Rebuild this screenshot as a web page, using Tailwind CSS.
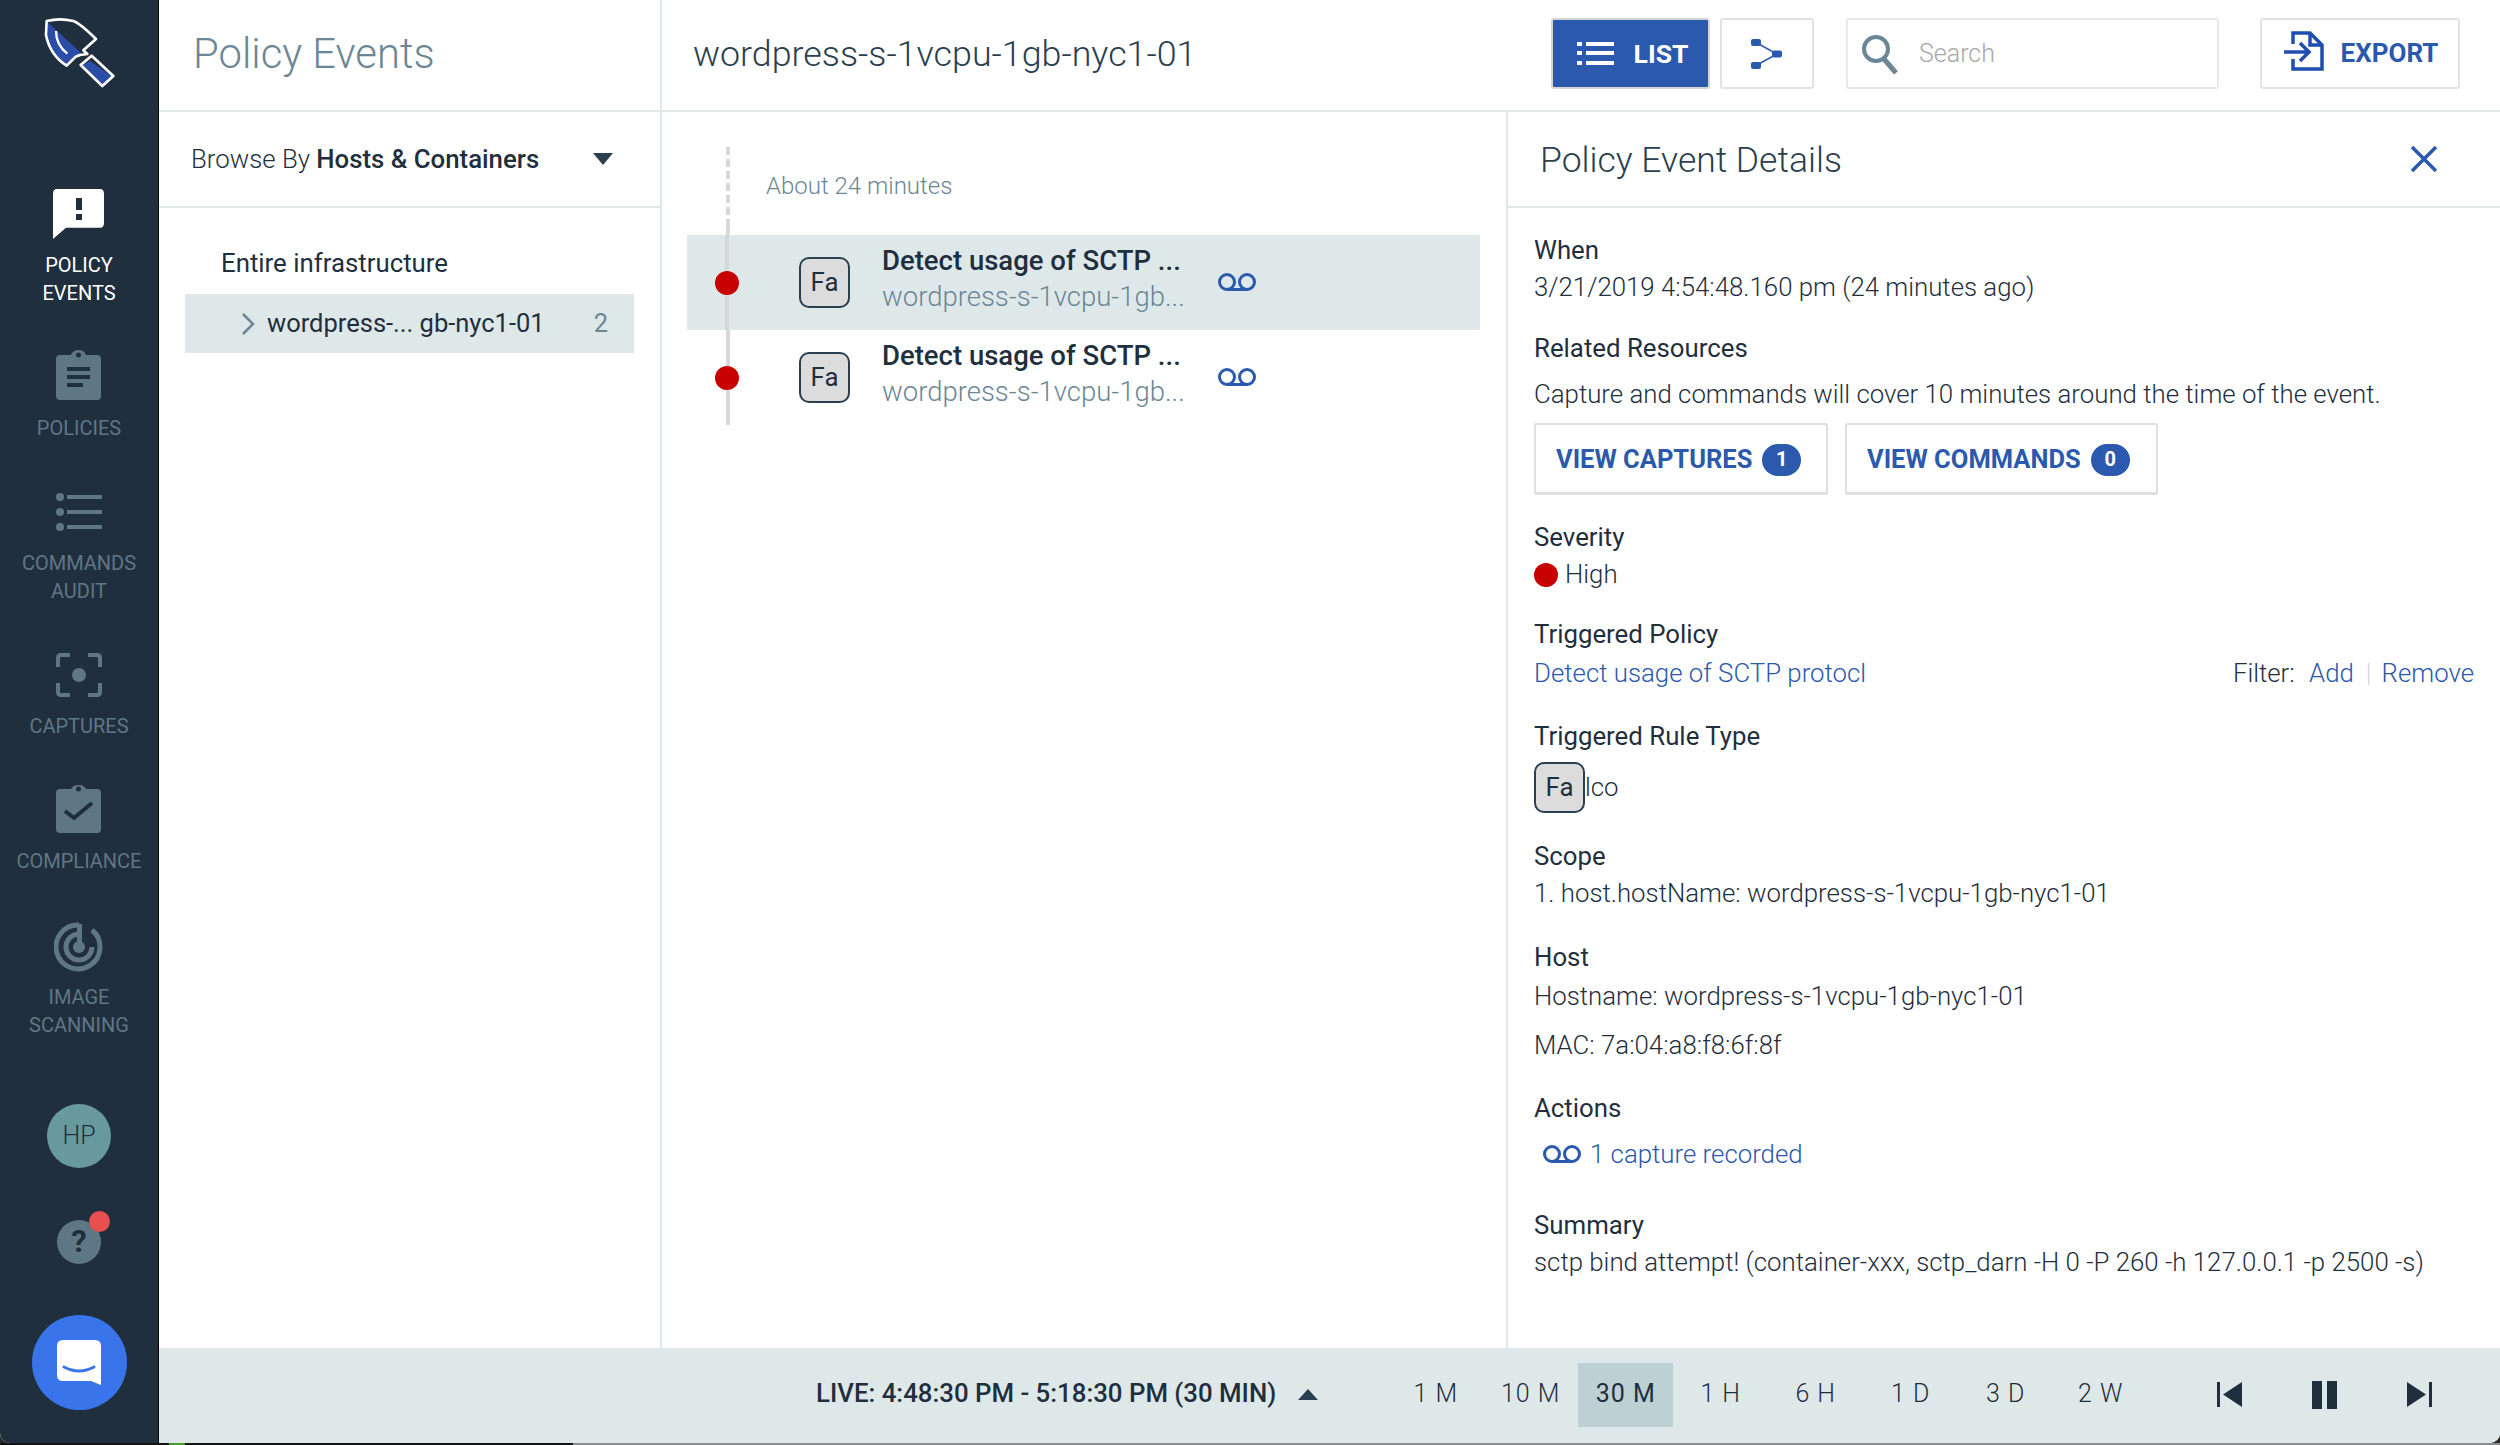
<!DOCTYPE html>
<html lang="en">
<head>
    <meta charset="UTF-8" />
    <title>Policy Events</title>
    <script src="https://cdn.jsdelivr.net/npm/@tailwindcss/browser@4"></script>
</head>
<body class="bg-[#2b2b2b] w-[2500px] h-[1445px] overflow-hidden font-['Roboto',sans-serif] text-[25.8px] font-light text-[#1f2f3e]">
    <div class="flex h-[1443px] bg-white rounded-b-[10px] overflow-hidden">

        <!-- sidebar -->
        <nav class="w-[159px] shrink-0 bg-[#202f3e] border-r border-black flex flex-col items-center text-[20px] leading-[28px] font-normal text-[#5f7685] text-center">
            <svg class="mt-[5px] ml-[1px] w-[100px] h-[100px]" viewBox="0 0 300 300">
                <path d="M53 52 L160 150 L138 152 L110 178 Q65 150 53 90 Z" fill="#2a4ea8"/>
                <path d="M180 168 L245 213 L217 238 L158 180 Z" fill="#2a4ea8"/>
                <path d="M50 48 Q90 38 130 48 Q150 55 198 102 L160 136 L172 147 L150 150 L137 155 L110 182 Q60 150 48 90 Z" fill="none" stroke="#fff" stroke-width="8" stroke-linejoin="round"/>
                <path d="M185 152 L250 213 L217 243 L152 180 Z" fill="none" stroke="#fff" stroke-width="8" stroke-linejoin="round"/>
                <path d="M78 78 Q78 120 112 146" fill="none" stroke="#fff" stroke-width="7"/>
            </svg>

            <a class="mt-[84px] flex flex-col items-center text-white">
                <svg class="w-[51px] h-[50px]" viewBox="0 0 51 50">
                    <path d="M4 0 H47 Q51 0 51 4 V27 Q51 31 47 31 H13 L0 40 V4 Q0 0 4 0 Z" transform="scale(1 1.25)" fill="#fff"/>
                    <rect x="23" y="9" width="6" height="12" fill="#202f3e"/>
                    <rect x="23" y="25" width="6" height="6" fill="#202f3e"/>
                </svg>
                <span class="mt-[12px]">POLICY<br>EVENTS</span>
            </a>
            <a class="mt-[43px] flex flex-col items-center">
                <svg class="w-[45px] h-[50px]" viewBox="0 0 45 50">
                    <path d="M4 5 H15 Q17 0 22.500 0 Q28 0 30 5 H41 Q45 5 45 9 V46 Q45 50 41 50 H4 Q0 50 0 46 V9 Q0 5 4 5 Z" fill="#5f7685"/>
                    <circle cx="22.500" cy="5" r="2.500" fill="#202f3e"/>
                    <path d="M11 17 H34 V21 H11 Z M11 25 H34 V29 H11 Z M11 33 H27 V37 H11 Z" fill="#202f3e"/>
                </svg>
                <span class="mt-[14px]">POLICIES</span>
            </a>
            <a class="mt-[51px] flex flex-col items-center">
                <svg class="w-[46px] h-[38px]" viewBox="0 0 46 38">
                    <circle cx="4" cy="4" r="4" fill="#5f7685"/><circle cx="4" cy="19" r="4" fill="#5f7685"/><circle cx="4" cy="34" r="4" fill="#5f7685"/>
                    <path d="M11 2 H46 V6 H11 Z M11 17 H46 V21 H11 Z M11 32 H46 V36 H11 Z" fill="#5f7685"/>
                </svg>
                <span class="mt-[18px]">COMMANDS<br>AUDIT</span>
            </a>
            <a class="mt-[48px] flex flex-col items-center">
                <svg class="w-[46px] h-[44px]" viewBox="0 0 46 44">
                    <path d="M2 14 V5 Q2 2 5 2 H14 M32 2 H41 Q44 2 44 5 V14 M44 30 V39 Q44 42 41 42 H32 M14 42 H5 Q2 42 2 39 V30" fill="none" stroke="#5f7685" stroke-width="4"/>
                    <circle cx="23" cy="22" r="7" fill="#5f7685"/>
                </svg>
                <span class="mt-[15px]">CAPTURES</span>
            </a>
            <a class="mt-[45px] flex flex-col items-center">
                <svg class="w-[45px] h-[48px]" viewBox="0 0 45 48">
                    <path d="M4 4 H15 Q17 0 22.500 0 Q28 0 30 4 H41 Q45 4 45 8 V44 Q45 48 41 48 H4 Q0 48 0 44 V8 Q0 4 4 4 Z" fill="#5f7685"/>
                    <circle cx="22.500" cy="4" r="2.500" fill="#202f3e"/>
                    <path d="M9 26 L18 33 L36 18" fill="none" stroke="#202f3e" stroke-width="4"/>
                </svg>
                <span class="mt-[14px]">COMPLIANCE</span>
            </a>
            <a class="mt-[47px] flex flex-col items-center">
                <svg class="w-[50px] h-[50px]" viewBox="0 0 50 50">
                    <path d="M38 8 A22 22 0 1 1 25 3 " fill="none" stroke="#5f7685" stroke-width="5"/>
                    <path d="M25 12 A13 13 0 1 0 38 25" fill="none" stroke="#5f7685" stroke-width="5"/>
                    <circle cx="25" cy="25" r="6" fill="#5f7685"/>
                    <path d="M23 2 H28 V25 H23 Z" fill="#5f7685"/>
                </svg>
                <span class="mt-[11px]">IMAGE<br>SCANNING</span>
            </a>
            <div class="mt-[65px] w-[64px] h-[64px] rounded-full bg-[#67999d] flex items-center justify-center text-[25px] font-light text-[#1f2f3e]">HP</div>
            <div class="relative mt-[52px] w-[44px] h-[44px] rounded-full bg-[#5f7685] flex items-center justify-center text-[31px] font-bold text-[#202f3e]">
                ?
                <span class="absolute top-[-9px] right-[-9px] w-[21px] h-[21px] rounded-full bg-[#e8504f]"></span>
            </div>
            <div class="mt-[51px] w-[95px] h-[95px] rounded-full bg-[#3a74ea] flex items-center justify-center">
                <svg class="w-[44px] h-[45px]" viewBox="0 0 44 45">
                    <path d="M6 0 H38 Q44 0 44 6 V45 L34 41 H6 Q0 41 0 35 V6 Q0 0 6 0 Z" fill="#fff"/>
                    <path d="M7 27 Q22 35 37 27" fill="none" stroke="#3a74ea" stroke-width="3" stroke-linecap="round"/>
                </svg>
            </div>
        </nav>

        <div class="flex-1 flex flex-col min-w-0">
            <!-- top bar -->
            <header class="h-[112px] shrink-0 flex border-b-2 border-[#dfe8e9]">
                <div class="w-[503px] shrink-0 border-r-2 border-[#dfe8e9] pl-[34px] pb-[2px] flex items-center text-[41.8px] text-[#6b8796]">Policy Events</div>
                <div class="flex-1 flex items-center pl-[31px] pr-[40px]">
                    <h1 class="text-[35.8px] text-[#2a3f50]">wordpress-s-1vcpu-1gb-nyc1-01</h1>
                    <div class="ml-auto flex items-center mb-[3px]">
                        <button class="w-[159px] h-[71px] bg-[#2a59ad] border-2 border-[#d5d5d5] rounded-[3px] flex items-center justify-center gap-[20px] pl-[4px] text-white font-bold text-[26.5px]">
                            <svg class="w-[37px] h-[23px]" viewBox="0 0 37 23" fill="#fff">
                                <rect x="0" y="0" width="5" height="4"/><rect x="0" y="9" width="5" height="4"/><rect x="0" y="19" width="5" height="4"/>
                                <rect x="9" y="0" width="28" height="4"/><rect x="9" y="9" width="28" height="4"/><rect x="9" y="19" width="28" height="4"/>
                            </svg>
                            LIST
                        </button>
                        <button class="ml-[10px] w-[94px] h-[71px] bg-white border-2 border-[#e2e2e2] rounded-[3px] flex items-center justify-center">
                            <svg class="w-[32px] h-[30px]" viewBox="0 0 32 30">
                                <path d="M5 3.500 L26 15 L5 26.500" fill="none" stroke="#2a59ad" stroke-width="1.500"/>
                                <rect x="0" y="0" width="10" height="7" rx="2" fill="#2a59ad"/>
                                <rect x="21" y="11.500" width="10" height="7" rx="2" fill="#2a59ad"/>
                                <rect x="0" y="23" width="10" height="7" rx="2" fill="#2a59ad"/>
                            </svg>
                        </button>
                        <label class="ml-[32px] w-[373px] h-[71px] border-2 border-[#e8e8e8] rounded-[3px] flex items-center pl-[13px] gap-[20px] text-[#a8a8a8] text-[25px]">
                            <svg class="w-[38px] h-[40px]" viewBox="0 0 38 40">
                                <circle cx="15" cy="15" r="12" fill="none" stroke="#6b8796" stroke-width="4"/>
                                <path d="M23 25 L35 39" stroke="#6b8796" stroke-width="5"/>
                            </svg>
                            Search
                        </label>
                        <button class="ml-[41px] w-[200px] h-[71px] bg-white border-2 border-[#e2e2e2] rounded-[3px] flex items-center justify-center gap-[17px] pl-[2px] text-[#2a59ad] font-bold text-[26px]">
                            <svg class="w-[40px] h-[40px] mb-[5px]" viewBox="0 0 40 40" fill="none" stroke="#1f4fae" stroke-width="3.500">
                                <path d="M9 13 V2 H26 L38 14 V38 H9 V28"/>
                                <path d="M26 2 V14 H38"/>
                                <path d="M0 21 H24 M16 12 L25 21 L16 30"/>
                            </svg>
                            EXPORT
                        </button>
                    </div>
                </div>
            </header>

            <div class="flex-1 flex min-h-0">
                <!-- host tree -->
                <aside class="w-[503px] shrink-0 border-r-2 border-[#dfe8e9]">
                    <div class="h-[96px] border-b-2 border-[#dfe8e9] flex items-center justify-between pl-[32px] pr-[47px]">
                        <span class="font-light">Browse By <b class="font-medium">Hosts &amp; Containers</b></span>
                        <span class="w-0 h-0 border-x-[10px] border-x-transparent border-t-[12px] border-t-[#2a3f50]"></span>
                    </div>
                    <div class="pl-[62px] pt-[37px] leading-[36px] font-normal">Entire infrastructure</div>
                    <div class="ml-[26px] mr-[26px] mt-[13px] h-[59px] bg-[#dfe8e9] flex items-center pl-[56px] pr-[26px] font-normal text-[25.5px]">
                        <svg class="w-[14px] h-[24px] mr-[12px]" viewBox="0 0 14 24"><path d="M2 2 L12 12 L2 22" fill="none" stroke="#6b8796" stroke-width="2.500"/></svg>
                        <span>wordpress-... gb-nyc1-01</span>
                        <span class="ml-auto text-[#6b8796]">2</span>
                    </div>
                </aside>

                <!-- event list -->
                <section class="w-[846px] shrink-0 border-r-2 border-[#dfe8e9] relative pt-[25px] pl-[25px]">
                    <div class="absolute left-[64px] top-[35px] h-[80px] border-l-[4px] border-dashed border-[#d8d8d8]"></div>
                    <div class="absolute left-[64px] top-[115px] h-[198px] w-[4px] bg-[#d8d8d8]"></div>
                    <div class="pl-[79px] mt-[8px] h-[90px] pt-[23px] leading-[36px] text-[24px] text-[#6b8796]">About 24 minutes</div>
                    <div class="relative w-[793px] h-[95px] bg-[#dfe8e9] flex items-center">
                        <div class="absolute left-[38px] w-[4px] h-full bg-[#d4d8d9]"></div>
                        <span class="absolute left-[28px] w-[24px] h-[24px] rounded-full bg-[#c80000]"></span>
                        <span class="ml-[112px] w-[51px] h-[51px] rounded-[10px] border-2 border-[#2a3f50] bg-[#dcdcdc] flex items-center justify-center font-normal">Fa</span>
                        <div class="ml-[32px] w-[310px] leading-[36px] text-[27.5px] mb-[7px]">
                            <p class="font-medium truncate">Detect usage of SCTP ...</p>
                            <p class="text-[#6b8796] truncate">wordpress-s-1vcpu-1gb...</p>
                        </div>
                        <svg class="ml-[25px] w-[40px] h-[19px]" viewBox="0 0 40 19" fill="none" stroke="#2a59ad" stroke-width="3"><circle cx="10" cy="9" r="7.500"/><circle cx="30" cy="9" r="7.500"/><path d="M10 16.500 H30"/></svg>
                    </div>
                    <div class="relative w-[793px] h-[95px] flex items-center">
                        <span class="absolute left-[28px] w-[24px] h-[24px] rounded-full bg-[#c80000]"></span>
                        <span class="ml-[112px] w-[51px] h-[51px] rounded-[10px] border-2 border-[#2a3f50] bg-[#dcdcdc] flex items-center justify-center font-normal">Fa</span>
                        <div class="ml-[32px] w-[310px] leading-[36px] text-[27.5px] mb-[7px]">
                            <p class="font-medium truncate">Detect usage of SCTP ...</p>
                            <p class="text-[#6b8796] truncate">wordpress-s-1vcpu-1gb...</p>
                        </div>
                        <svg class="ml-[25px] w-[40px] h-[19px]" viewBox="0 0 40 19" fill="none" stroke="#2a59ad" stroke-width="3"><circle cx="10" cy="9" r="7.500"/><circle cx="30" cy="9" r="7.500"/><path d="M10 16.500 H30"/></svg>
                    </div>
                </section>

                <!-- details -->
                <section class="flex-1 min-w-0">
                    <div class="h-[96px] border-b-2 border-[#dfe8e9] flex items-center justify-between pl-[32px] pr-[62px]">
                        <h2 class="text-[35.5px] text-[#2a3f50] pt-[4px]">Policy Event Details</h2>
                        <svg class="w-[28px] h-[28px]" viewBox="0 0 28 28"><path d="M2 2 L26 26 M26 2 L2 26" stroke="#2a59ad" stroke-width="3.500"/></svg>
                    </div>
                    <div class="pl-[26px] pr-[26px] pt-[24px] leading-[37px]">
                        <p class="font-normal">When</p>
                        <p>3/21/2019 4:54:48.160 pm (24 minutes ago)</p>

                        <p class="font-normal mt-[24px]">Related Resources</p>
                        <p class="mt-[9px]">Capture and commands will cover 10 minutes around the time of the event.</p>
                        <div class="flex gap-[17px] mt-[10px]">
                            <button class="w-[294px] h-[72px] border-2 border-b-[3px] border-[#e0e0e0] rounded-[2px] flex items-center pl-[20px] pt-[2px] gap-[10px] font-bold text-[25.5px] text-[#2a59ad]">
                                VIEW CAPTURES
                                <span class="w-[39px] h-[32px] rounded-full bg-[#2a59ad] text-white text-[20px] flex items-center justify-center">1</span>
                            </button>
                            <button class="w-[313px] h-[72px] border-2 border-b-[3px] border-[#e0e0e0] rounded-[2px] flex items-center pl-[20px] pt-[2px] gap-[10px] font-bold text-[25.5px] text-[#2a59ad]">
                                VIEW COMMANDS
                                <span class="w-[39px] h-[32px] rounded-full bg-[#2a59ad] text-white text-[20px] flex items-center justify-center">0</span>
                            </button>
                        </div>

                        <p class="font-normal mt-[24px]">Severity</p>
                        <p class="flex items-center gap-[7px]"><span class="w-[24px] h-[24px] rounded-full bg-[#c80000]"></span>High</p>

                        <p class="font-normal mt-[23px]">Triggered Policy</p>
                        <div class="flex justify-between mt-[2px]">
                            <a class="text-[#2a59ad]">Detect usage of SCTP protocl</a>
                            <span>Filter: <a class="text-[#2a59ad] ml-[8px]">Add</a><span class="text-[#d8d8d8] ml-[12px] mr-[10px]">|</span><a class="text-[#2a59ad]">Remove</a></span>
                        </div>

                        <p class="font-normal mt-[26px]">Triggered Rule Type</p>
                        <div class="flex items-center mt-[7px]">
                            <span class="w-[51px] h-[51px] rounded-[10px] border-2 border-[#2a3f50] bg-[#dcdcdc] flex items-center justify-center font-normal">Fa</span>lco
                        </div>

                        <p class="font-normal mt-[25px]">Scope</p>
                        <p>1. host.hostName: wordpress-s-1vcpu-1gb-nyc1-01</p>

                        <p class="font-normal mt-[27px]">Host</p>
                        <p class="mt-[2px]">Hostname: wordpress-s-1vcpu-1gb-nyc1-01</p>
                        <p class="mt-[12px]">MAC: 7a:04:a8:f8:6f:8f</p>

                        <p class="font-normal mt-[26px]">Actions</p>
                        <p class="flex items-center gap-[8px] mt-[9px] pl-[8px] text-[#2a59ad]">
                            <svg class="w-[40px] h-[19px]" viewBox="0 0 40 19" fill="none" stroke="#2a59ad" stroke-width="3"><circle cx="10" cy="9" r="7.500"/><circle cx="30" cy="9" r="7.500"/><path d="M10 16.500 H30"/></svg>
                            1 capture recorded
                        </p>

                        <p class="font-normal mt-[34px]">Summary</p>
                        <p>sctp bind attempt! (container-xxx, sctp_darn -H 0 -P 260 -h 127.0.0.1 -p 2500 -s)</p>
                    </div>
                </section>
            </div>

            <!-- time nav -->
            <footer class="h-[95px] shrink-0 bg-[#dfe8e9] flex items-center pl-[657px] pb-[2px]">
                <span class="font-medium mb-[2px]">LIVE: 4:48:30 PM - 5:18:30 PM (30 MIN)</span>
                <span class="ml-[22px] w-0 h-0 border-x-[10px] border-x-transparent border-b-[11px] border-b-[#2a3f50]"></span>
                <div class="ml-[70px] flex tracking-[1px] text-[25px]">
                    <a class="w-[95px] h-[64px] pb-[2px] flex items-center justify-center">1 M</a>
                    <a class="w-[95px] h-[64px] pb-[2px] flex items-center justify-center">10 M</a>
                    <a class="w-[95px] h-[64px] pb-[2px] flex items-center justify-center bg-[#bdd0d3] font-normal">30 M</a>
                    <a class="w-[95px] h-[64px] pb-[2px] flex items-center justify-center">1 H</a>
                    <a class="w-[95px] h-[64px] pb-[2px] flex items-center justify-center">6 H</a>
                    <a class="w-[95px] h-[64px] pb-[2px] flex items-center justify-center">1 D</a>
                    <a class="w-[95px] h-[64px] pb-[2px] flex items-center justify-center">3 D</a>
                    <a class="w-[95px] h-[64px] pb-[2px] flex items-center justify-center">2 W</a>
                </div>
                <svg class="ml-[69px] w-[25px] h-[25px]" viewBox="0 0 25 25" fill="#1f2f3e"><rect x="0" y="0" width="3" height="25"/><path d="M25 0 V25 L6 12.500 Z"/></svg>
                <svg class="ml-[70px] w-[25px] h-[28px]" viewBox="0 0 25 28" fill="#1f2f3e"><rect x="0" y="0" width="10" height="28"/><rect x="15" y="0" width="10" height="28"/></svg>
                <svg class="ml-[70px] w-[25px] h-[25px]" viewBox="0 0 25 25" fill="#1f2f3e"><path d="M0 0 V25 L19 12.500 Z"/><rect x="22" y="0" width="3" height="25"/></svg>
            </footer>
        </div>
    </div>
    <!-- sliver of the desktop below the window -->
    <div class="flex h-[2px]">
        <div class="w-[169px] bg-[#151515]"></div>
        <div class="w-[16px] bg-[#4f9a2e]"></div>
        <div class="w-[388px] bg-[#151515]"></div>
        <div class="flex-1 bg-[#8c8c8c]"></div>
    </div>
</body>
</html>
